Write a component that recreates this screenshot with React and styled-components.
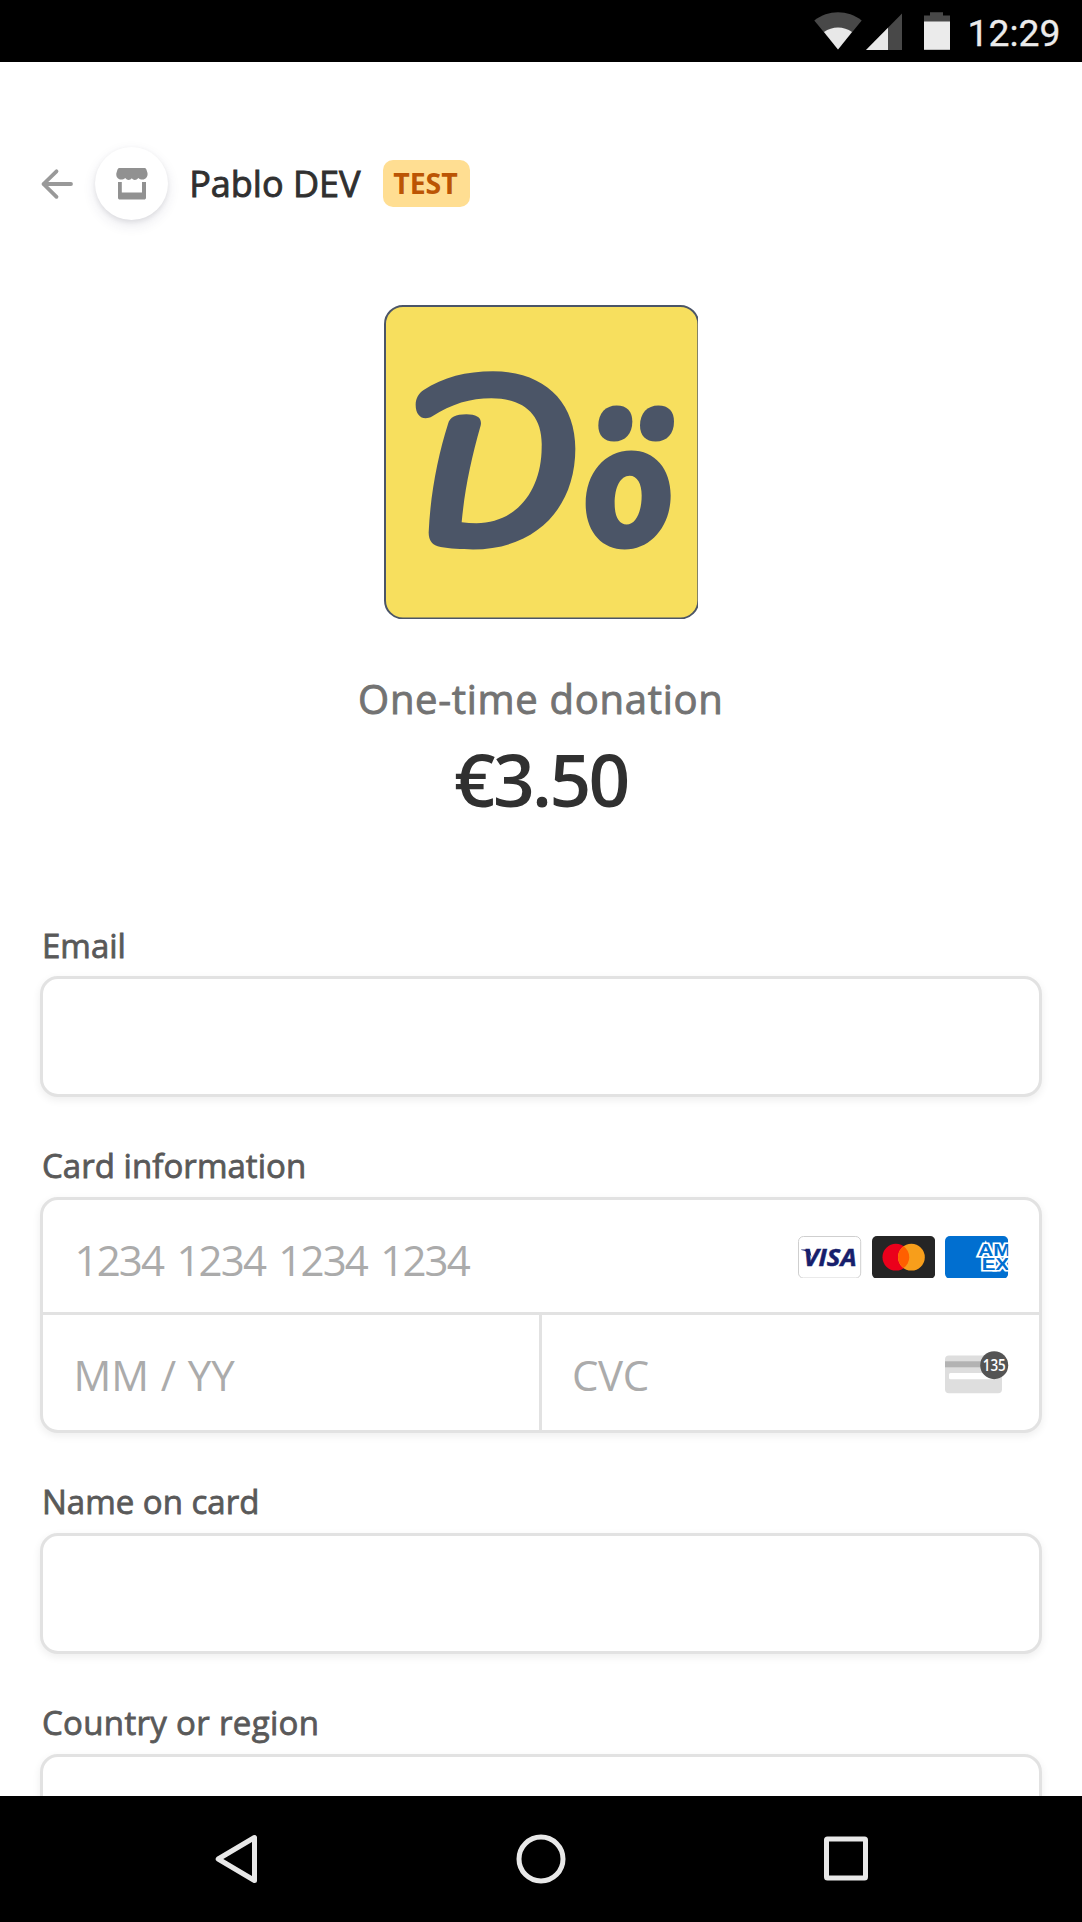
import React from "react";
import styled, { createGlobalStyle } from "styled-components";

const Global = createGlobalStyle`
  * { box-sizing: border-box; }
  body { margin: 0; background: #fff; }
`;

const Screen = styled.div`
  width: 1082px;
  height: 1922px;
  display: flex;
  flex-direction: column;
  overflow: hidden;
  background: #fff;
  font-family: "Open Sans", "Noto Sans", sans-serif;
`;

const StatusBar = styled.header`
  flex: none;
  height: 62.4px;
  background: #000;
  display: flex;
  justify-content: flex-end;
  padding-right: 21px;
`;

const StatusIcons = styled.svg`
  display: block;
  width: 140px;
  height: 62px;
  margin-right: 13.5px;
`;

const Clock = styled.span`
  font: 400 37.3px/62px Roboto, sans-serif;
  color: #ebebeb;
  width: 93.5px;
  height: 64px;
  padding-top: 2px;
  white-space: nowrap;
  -webkit-text-stroke: 0.3px #ebebeb;
`;

const Page = styled.main`
  flex: 1;
  min-height: 0;
  overflow: hidden;
  display: flex;
  flex-direction: column;
  padding: 84.2px 40px 0 39.5px;
`;

const Merchant = styled.div`
  flex: none;
  height: 74px;
  display: flex;
  align-items: center;
`;

const BackArrow = styled.svg`
  width: 36px;
  height: 36px;
  margin: 0 20px 0 -0.5px;
`;

const Avatar = styled.div`
  width: 73.4px;
  height: 73.4px;
  border-radius: 50%;
  background: #fff;
  display: flex;
  align-items: center;
  justify-content: center;
  box-shadow: 0 5px 13px rgba(50, 50, 93, 0.11), 0 2px 5px rgba(0, 0, 0, 0.08);
`;

const MerchantName = styled.span`
  font-size: 36px;
  line-height: 50px;
  font-weight: 400;
  color: #303030;
  margin-left: 20.8px;
  width: 193.8px;
  white-space: nowrap;
  -webkit-text-stroke: 0.9px #303030;
`;

const Badge = styled.span`
  width: 87px;
  height: 47px;
  padding-right: 2px;
  border-radius: 10px;
  background: #ffde92;
  color: #bb5504;
  font-size: 28.5px;
  line-height: 47px;
  font-weight: 700;
  text-align: center;
`;

const Product = styled.section`
  flex: none;
  display: flex;
  flex-direction: column;
  align-items: center;
  padding-top: 84px;
  margin-bottom: 98px;
`;

const LogoImage = styled.svg`
  display: block;
  width: 314px;
  height: 314.4px;
  margin-bottom: 51.6px;
`;

const ProductName = styled.h1`
  margin: 0 0 7px;
  font-size: 40px;
  line-height: 56px;
  font-weight: 400;
  color: #737373;
  letter-spacing: 0.7px;
  -webkit-text-stroke: 0.9px #737373;
`;

const Price = styled.div`
  font-size: 73px;
  line-height: 90px;
  font-weight: 600;
  color: #303030;
  letter-spacing: -2.6px;
`;

const Form = styled.form`
  display: flex;
  flex-direction: column;
  gap: 45px;
`;

const Field = styled.div`
  display: flex;
  flex-direction: column;
`;

const Label = styled.label`
  height: 48px;
  margin: 0 0 6.8px 2.5px;
  font-size: 33px;
  line-height: 48px;
  font-weight: 400;
  color: #595959;
  white-space: nowrap;
  letter-spacing: ${(p) => p.$spacing || "0"};
  -webkit-text-stroke: 0.8px #595959;
`;

const Box = styled.div`
  height: ${(p) => p.$height || "121px"};
  border: 3px solid #e2e2e2;
  border-radius: 18px;
  background: #fff;
  box-shadow: 0 3px 8px rgba(0, 0, 0, 0.07);
  display: flex;
  flex-direction: column;
`;

const CardRow = styled.div`
  height: ${(p) => (p.$divided ? "118px" : "112px")};
  display: flex;
  border-top: ${(p) => (p.$divided ? "3px solid #e2e2e2" : "none")};
`;

const Cell = styled.div`
  flex: ${(p) => p.$basis || "1"};
  display: flex;
  align-items: center;
  justify-content: space-between;
  padding: 0 30.5px 0 ${(p) => p.$indent || "32px"};
  border-left: ${(p) => (p.$divided ? "3px solid #e2e2e2" : "none")};
`;

const Placeholder = styled.span`
  font-size: 42px;
  line-height: 58px;
  color: #ababab;
  padding-top: ${(p) => p.$drop || "5px"};
  white-space: nowrap;
  letter-spacing: ${(p) => p.$spacing || "0"};
  word-spacing: ${(p) => p.$words || "0"};
`;

const Brands = styled.div`
  display: flex;
  gap: 10.3px;
  padding-top: 2px;
`;

const BrandIcon = styled.svg`
  display: block;
  width: 63.2px;
  height: 42.6px;
`;

const CvcIcon = styled.svg`
  display: block;
  width: 64px;
  height: 43px;
`;

const NavBar = styled.nav`
  flex: none;
  height: 126px;
  background: #000;
  display: flex;
  justify-content: space-between;
  padding: 33px 210px 0 210px;
`;

const NavIcon = styled.svg`
  width: 60px;
  height: 60px;
`;

function StoreIcon() {
  return (
    <svg width="32" height="32" viewBox="0 0 32 32">
      <path
        fill="#919191"
        d="M3.5 0H28.5C29.5 0 30 .6 30.4 1.5L31.5 5C32 9 29.5 11.5 26.5 11.5C24.8 11.5 23.5 11 22.4 10C21.3 11.3 20.2 12 18.8 12C17.5 12 16.8 11.3 15.8 10.3C14.8 11.3 14 12 12.7 12C11.3 12 10.3 11.2 9.2 10C8 11 6.8 11.5 5 11.5C2 11.5 0 9 .3 5.5L1.5 1.5C1.9.6 2.5 0 3.5 0Z"
      />
      <path fill="#919191" d="M2 14H5.8V24.5H26V14H30V29.8C30 31 29.3 31.6 28 31.6H4C2.7 31.6 2 31 2 29.8Z" />
    </svg>
  );
}

function Logo() {
  return (
    <LogoImage viewBox="43 43 942 944" preserveAspectRatio="none">
      <rect x="46" y="46" width="940" height="938" rx="54" fill="#f7df5e" stroke="#4b5567" strokeWidth="6" />
      <g fill="#4b5567">
        <path d="M188 377C162 392 138 378 138 343C138 323 147 308 162 298C220 260 290 242 370 242C520 242 617 330 617 475C617 655 495 777 310 777C275 777 240 775 213 770C188 765 177 750 177 726C182 610 205 495 235 400C241 379 258 371 290 371C322 371 338 382 333 405C303 510 285 600 276 695C290 697 305 698 320 698C440 698 516 600 516 470C520 370 460 323 365 323C303 323 245 340 188 377Z" />
        <path d="M741 345C772 345 788 363 788 393C788 430 767 453 733 453C703 453 686 435 686 405C686 368 708 345 741 345Z" />
        <path d="M866 345C897 345 913 363 913 393C913 430 892 453 858 453C828 453 811 435 811 405C811 368 833 345 866 345Z" />
        <path
          fillRule="evenodd"
          d="M785 480C855 480 903 535 903 615C903 705 845 777 765 777C695 777 648 722 648 640C648 548 705 480 785 480ZM780 556C752 556 735 590 735 640C735 678 748 702 771 702C798 702 816 665 816 615C816 580 803 556 780 556Z"
        />
      </g>
    </LogoImage>
  );
}

function Visa() {
  return (
    <BrandIcon viewBox="0 0 63.2 42.6">
      <rect x=".5" y=".5" width="62.2" height="41.6" rx="5" fill="#fff" stroke="#cfcfcf" />
      <text
        x="5.5" y="30" textLength="53" lengthAdjust="spacingAndGlyphs"
        fontFamily="Open Sans" fontSize="22.5" fontWeight="700" fontStyle="italic" fill="#171e6c"
        stroke="#171e6c" strokeWidth="0.5"
      >
        VISA
      </text>
      <path fill="#171e6c" d="M3.2 13.6H10C11.4 13.6 12 14.2 12.3 15.5L13.5 21C11.5 17 8 14.8 3.2 14.1Z" />
    </BrandIcon>
  );
}

function Mastercard() {
  return (
    <BrandIcon viewBox="0 0 63.2 42.6">
      <rect width="63.2" height="42.6" rx="5" fill="#252525" />
      <circle cx="23.9" cy="21.2" r="13.4" fill="#eb001b" />
      <circle cx="39.4" cy="21.2" r="13.4" fill="#f79e1b" />
      <path fill="#ff5f00" d="M31.65 10.3A13.4 13.4 0 0 1 31.65 32.1A13.4 13.4 0 0 1 31.65 10.3Z" />
    </BrandIcon>
  );
}

function Amex() {
  return (
    <BrandIcon viewBox="0 0 63.2 42.6">
      <defs>
        <clipPath id="amex-card">
          <rect width="63.2" height="42.6" rx="5" />
        </clipPath>
      </defs>
      <g clipPath="url(#amex-card)">
        <rect width="63.2" height="42.6" fill="#016fd0" />
        <g
          fontFamily="Liberation Sans" fontSize="16" fontWeight="700"
          fill="#016fd0" stroke="#fff" strokeWidth="3.2" paintOrder="stroke"
        >
          <text x="33" y="20.2" textLength="33" lengthAdjust="spacingAndGlyphs">AM</text>
          <text x="36.8" y="34.2" textLength="27.5" lengthAdjust="spacingAndGlyphs">EX</text>
        </g>
      </g>
    </BrandIcon>
  );
}

function Cvc() {
  return (
    <CvcIcon viewBox="0 0 64 43">
      <rect y="4.6" width="57" height="37.6" rx="4" fill="#dedede" />
      <rect y="10.3" width="57" height="6" fill="#b3b3b3" />
      <rect x="4" y="22" width="48" height="6.2" rx="1.5" fill="#fff" />
      <circle cx="49.2" cy="14.2" r="14" fill="#545454" />
      <text
        x="37.8" y="19.8" textLength="23" lengthAdjust="spacingAndGlyphs"
        fontFamily="Open Sans" fontSize="15.8" fontWeight="600" fill="#fff"
      >
        135
      </text>
    </CvcIcon>
  );
}

export default function App() {
  return (
    <Screen>
      <Global />
      <StatusBar>
        <StatusIcons viewBox="814 0 140 62">
          <path fill="#484848" d="M814.3 20.5C828 9.5 848 9.5 861.7 20.5L838 49.5Z" />
          <path fill="#e8e8e8" d="M824 32C832 26 844 26 852 32L838 49.5Z" />
          <path fill="#484848" d="M902 13.5V50H866Z" />
          <path fill="#e8e8e8" d="M888 27.8V50H866Z" />
          <path fill="#484848" d="M930 12.3H943V15.5H950V23H924V15.5H930Z" />
          <rect x="924" y="21.5" width="26" height="28.3" fill="#ebebeb" />
        </StatusIcons>
        <Clock>12:29</Clock>
      </StatusBar>

      <Page>
        <Merchant>
          <BackArrow viewBox="0 0 36 36">
            <path
              d="M32 18H4.5M17.5 5.3L4.5 18L17.5 30.8"
              fill="none" stroke="#999" strokeWidth="3.8" strokeLinecap="round" strokeLinejoin="round"
            />
          </BackArrow>
          <Avatar>
            <StoreIcon />
          </Avatar>
          <MerchantName>Pablo DEV</MerchantName>
          <Badge>TEST</Badge>
        </Merchant>

        <Product>
          <Logo />
          <ProductName>One-time donation</ProductName>
          <Price>€3.50</Price>
        </Product>

        <Form>
          <Field>
            <Label>Email</Label>
            <Box />
          </Field>
          <Field>
            <Label $spacing="0.05px">Card information</Label>
            <Box $height="236px">
              <CardRow>
                <Cell>
                  <Placeholder $spacing="-1.85px" $words="4.2px" $drop="8px">1234 1234 1234 1234</Placeholder>
                  <Brands>
                    <Visa />
                    <Mastercard />
                    <Amex />
                  </Brands>
                </Cell>
              </CardRow>
              <CardRow $divided>
                <Cell $basis="0 0 496px" $indent="31px">
                  <Placeholder $words="0.8px">MM / YY</Placeholder>
                </Cell>
                <Cell $divided $indent="30.5px">
                  <Placeholder $spacing="-0.4px">CVC</Placeholder>
                  <Cvc />
                </Cell>
              </CardRow>
            </Box>
          </Field>
          <Field>
            <Label>Name on card</Label>
            <Box />
          </Field>
          <Field>
            <Label $spacing="0.33px">Country or region</Label>
            <Box />
          </Field>
        </Form>
      </Page>

      <NavBar>
        <NavIcon viewBox="0 0 60 60">
          <path d="M44.5 8.5V51.5L8.2 30Z" fill="none" stroke="#e8e8e8" strokeWidth="5" strokeLinejoin="round" />
        </NavIcon>
        <NavIcon viewBox="0 0 60 60">
          <circle cx="30" cy="30" r="22" fill="none" stroke="#e8e8e8" strokeWidth="5" />
        </NavIcon>
        <NavIcon viewBox="0 0 60 60">
          <rect x="14.5" y="10" width="39" height="39" rx="1" fill="none" stroke="#e8e8e8" strokeWidth="5" />
        </NavIcon>
      </NavBar>
    </Screen>
  );
}
